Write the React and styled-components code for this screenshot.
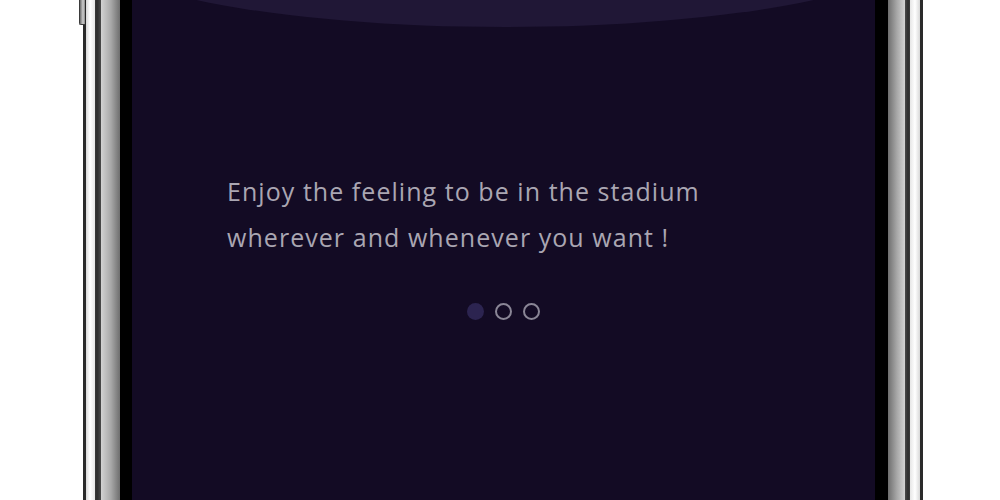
import React from "react";
import styled, { createGlobalStyle } from "styled-components";

const Global = createGlobalStyle`
  html, body { margin: 0; padding: 0; background: #ffffff; }
  #root { width: 1000px; height: 500px; overflow: hidden; }
`;

const Page = styled.div`
  width: 1000px;
  height: 500px;
  display: flex;
  background: #ffffff;
  padding-left: 83px;
  box-sizing: border-box;
`;

const Phone = styled.div`
  position: relative;
  width: 840px;
  height: 500px;
  display: flex;
  box-sizing: border-box;
  padding: 0 48px 0 49px;
  background: linear-gradient(
    90deg,
    #2a2a2a 0px, #2a2a2a 3px,
    #d8d8d8 3px, #ffffff 7px, #e6e6e6 12px,
    #3a3a3a 12px, #2c2c2c 14px, #4a4a4a 18px,
    #d2d2d2 18px, #a8a8a8 28px, #6e6e6e 37px,
    #000000 37px, #000000 49px,
    #000000 calc(100% - 48px), #000000 calc(100% - 35px),
    #6e6e6e calc(100% - 35px), #a8a8a8 calc(100% - 26px), #d2d2d2 calc(100% - 18px),
    #4a4a4a calc(100% - 18px), #2c2c2c calc(100% - 15px), #3a3a3a calc(100% - 13px),
    #e6e6e6 calc(100% - 13px), #ffffff calc(100% - 8px), #d8d8d8 calc(100% - 3px),
    #2a2a2a calc(100% - 3px), #2a2a2a 100%
  );
`;

const SideButton = styled.div`
  position: absolute;
  left: -4px;
  top: 0;
  width: 5px;
  height: 24px;
  background: linear-gradient(90deg, #6a6a6a, #cfcfcf 60%, #8a8a8a);
  border-bottom-left-radius: 2px;
  border-left: 1px solid #3a3a3a;
  border-bottom: 1px solid #3a3a3a;
`;

const Screen = styled.div`
  position: relative;
  flex: 1;
  display: flex;
  flex-direction: column;
  align-items: center;
  background: #130b24;
  overflow: hidden;
`;

const Wave = styled.svg`
  position: absolute;
  top: 0;
  left: 0;
  width: 100%;
  height: 40px;
`;

const Content = styled.div`
  align-self: stretch;
  display: flex;
  flex-direction: column;
  align-items: center;
  padding: 168px 95px 0 95px;
  gap: 43px;
`;

const Caption = styled.p`
  align-self: stretch;
  margin: 0;
  font-family: "Open Sans", Lato, sans-serif;
  font-weight: 400;
  font-size: 25px;
  line-height: 46px;
  letter-spacing: 1.05px;
  color: #aaa6b2;
  white-space: nowrap;
`;

const Dots = styled.div`
  display: flex;
  gap: 11px;
  align-items: center;
`;

const Dot = styled.span`
  width: 17px;
  height: 17px;
  border-radius: 50%;
  box-sizing: border-box;
  background: ${(p) => (p.$active ? "#2c2450" : "transparent")};
  border: ${(p) => (p.$active ? "none" : "2.5px solid #8a8696")};
`;

export default function App() {
  return (
    <>
      <Global />
      <Page>
        <Phone>
          <SideButton />
          <Screen>
            <Wave viewBox="0 0 743 40" preserveAspectRatio="none">
              <ellipse cx="373" cy="-57" rx="420" ry="84" fill="#201736" />
            </Wave>
            <Content>
              <Caption>
                Enjoy the feeling to be in the stadium
                <br />
                wherever and whenever you want !
              </Caption>
              <Dots>
                <Dot $active />
                <Dot />
                <Dot />
              </Dots>
            </Content>
          </Screen>
        </Phone>
      </Page>
    </>
  );
}
